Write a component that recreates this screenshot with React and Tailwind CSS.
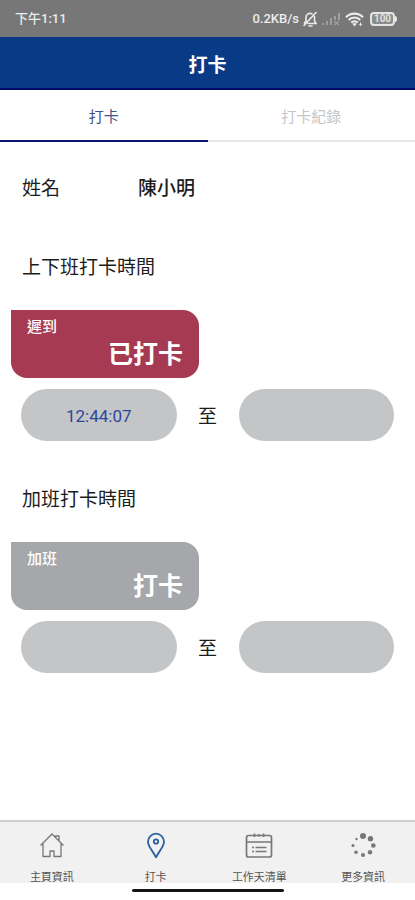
import { useState } from "react";

const TABS = [
  { id: "clock", label: "打卡" },
  { id: "records", label: "打卡紀錄" },
];

const SHIFTS = [
  { id: "work", title: "上下班打卡時間", status: "遲到", action: "已打卡", late: true, start: "12:44:07", end: "" },
  { id: "overtime", title: "加班打卡時間", status: "加班", action: "打卡", late: false, start: "", end: "" },
];

const NAV_ITEMS = [
  { id: "home", label: "主頁資訊", Icon: HomeIcon },
  { id: "clock", label: "打卡", Icon: PinIcon },
  { id: "workdays", label: "工作天清單", Icon: CalendarIcon },
  { id: "more", label: "更多資訊", Icon: MoreIcon },
];

export default function App() {
  const [tab, setTab] = useState("clock");

  return (
    <div className="flex min-h-screen flex-col bg-white font-['Roboto','Noto_Sans_CJK_TC',sans-serif] text-[#1c1c1c]">
      <StatusBar />

      <header className="flex h-[53px] items-center justify-center border-b-2 border-[#04086a] bg-[#083a85] pt-1.5">
        <h1 className="text-[19px] leading-6 font-bold text-white">打卡</h1>
      </header>

      <div role="tablist" className="grid grid-cols-2">
        {TABS.map((t) => (
          <button
            key={t.id}
            type="button"
            role="tab"
            aria-selected={tab === t.id}
            onClick={() => setTab(t.id)}
            className={`h-[52px] border-b-2 pt-1 text-[15px] ${
              tab === t.id ? "border-[#0b1470] text-[#3d5489]" : "border-[#e6e8ea] text-[#c6c6c6]"
            }`}
          >
            {t.label}
          </button>
        ))}
      </div>

      <main className="flex-1 pt-[35px]">
        <dl className="flex px-[22px] pb-2 text-[19px] leading-6">
          <dt className="w-29">姓名</dt>
          <dd className="font-medium">陳小明</dd>
        </dl>

        {SHIFTS.map((shift) => (
          <ShiftSection key={shift.id} shift={shift} />
        ))}
      </main>

      <BottomNav />
    </div>
  );
}

function ShiftSection({ shift }) {
  return (
    <section className="pt-[47px]">
      <h2 className="px-[22px] text-[19px] leading-6">{shift.title}</h2>

      <button
        type="button"
        className={`mt-[30px] ml-[11px] flex h-[68px] w-47 flex-col rounded-2xl rounded-tl-none px-4 pt-[5px] text-white ${
          shift.late ? "bg-[#a63a52]" : "bg-[#a5a7aa]"
        }`}
      >
        <span className="self-start text-[15px] leading-6 font-medium">{shift.status}</span>
        <span className="self-end text-[25px] leading-8 font-bold">{shift.action}</span>
      </button>

      <div className="mt-[11px] flex items-center px-[21px]">
        <TimeField label={`${shift.title} 開始`} value={shift.start} />
        <span className="w-[62px] pt-1 text-center text-[19px] leading-6">至</span>
        <TimeField label={`${shift.title} 結束`} value={shift.end} />
      </div>
    </section>
  );
}

function TimeField({ label, value }) {
  return (
    <input
      type="text"
      readOnly
      aria-label={label}
      value={value}
      className="h-[52px] min-w-0 flex-1 rounded-full bg-[#c3c5c7] pt-0.5 text-center text-[17px] text-[#2c479c] outline-none"
    />
  );
}

function BottomNav() {
  return (
    <footer>
      <nav className="grid h-[63px] grid-cols-4 border-t-2 border-[#cfcfcf] bg-[#f1f1f1]">
        {NAV_ITEMS.map(({ id, label, Icon }) => (
          <a key={id} href={`#${id}`} className="flex flex-col items-center pt-2 text-[#777777]">
            <Icon />
            <span className="mt-3 text-[11px] leading-4 text-[#555555]">{label}</span>
          </a>
        ))}
      </nav>
      <div className="flex h-[17px] justify-center pt-[6px]">
        <div className="h-[3px] w-[152px] rounded-full bg-[#161616]" />
      </div>
    </footer>
  );
}

function StatusBar() {
  return (
    <div className="flex h-[37px] items-center justify-between bg-[#777777] pr-[18px] pl-[15px] text-[13px] font-medium text-[#ececec]">
      <span>下午1:11</span>
      <div className="flex items-center gap-1">
        <span>0.2KB/s</span>
        <svg width="14" height="16" viewBox="0 0 14 16" fill="none" stroke="currentColor" strokeWidth="1.6" strokeLinecap="round">
          <path d="M3 10V6.5a4 4 0 0 1 6-3.600M11.500 5.500V10l1.500 2.500H5M6 15h3M1 14.500 13 1.500M1.500 12 3 10" />
        </svg>
        <svg width="20" height="16" viewBox="0 0 20 16" fill="none" stroke="#a0a0a0" strokeWidth="2">
          <path d="M2 14v-2M6 14v-4M10 14V7M14 9V5M18 9V2" />
          <path d="m13 10 5 4M18 10l-5 4" strokeWidth="1.3" />
        </svg>
        <svg width="19" height="16" viewBox="0 0 19 16" fill="none" stroke="currentColor" strokeWidth="2.2">
          <path d="M1 6.2a12 12 0 0 1 17 0M3.7 9a8 8 0 0 1 11.6 0M6.3 11.600a4.600 4.600 0 0 1 6.400 0" />
          <path d="m9.500 15.500-2-2.500a3 3 0 0 1 4 0Z" fill="currentColor" stroke="none" />
          <path d="M15.500 11.500v3M14 13.200l1.500 1.500 1.500-1.500" strokeWidth="1" />
        </svg>
        <div className="ml-0.5 flex items-center">
          <span className="flex h-[14px] w-[25px] items-center justify-center rounded border-2 border-[#e4e4e4] bg-[#8c8c8c] text-[10px] leading-none font-bold text-[#e0e0e0]">
            100
          </span>
          <span className="h-[6px] w-[2px] rounded-r bg-[#e4e4e4]" />
        </div>
      </div>
    </div>
  );
}

function HomeIcon() {
  return (
    <svg width="26" height="28" viewBox="0 0 26 28" fill="none" stroke="currentColor" strokeWidth="1.3" strokeLinejoin="round">
      <path d="M1.5 15.5 13 4l11.5 11.5M4 13.500v13h7V21h4v5.500h7v-13M16.500 7.500V6H20v5" />
    </svg>
  );
}

function PinIcon() {
  return (
    <svg width="26" height="28" viewBox="0 0 26 28" fill="none" stroke="#2c5f9f" strokeWidth="1.8" strokeLinejoin="round">
      <path d="M13 27.500C10.500 21.500 5 17 5 11.700a8 8 0 0 1 16 0C21 17 15.500 21.500 13 27.500Z" />
      <circle cx="13" cy="11.500" r="2.200" />
    </svg>
  );
}

function CalendarIcon() {
  return (
    <svg width="28" height="28" viewBox="0 0 28 28" fill="none" stroke="currentColor" strokeWidth="1.7">
      <rect x="1.500" y="5.500" width="25" height="21.500" rx="2" />
      <path d="M1.500 12h25M9.500 3.500V7M18.500 3.500V7" />
      <path d="M14 4v2.500" />
      <path d="M7 17.500h2M10.500 17.500h11M7 21.500h2M10.500 21.500h11" strokeWidth="1.5" />
    </svg>
  );
}

function MoreIcon() {
  return (
    <svg width="28" height="28" viewBox="0 0 28 28" fill="currentColor">
      <circle cx="14" cy="6" r="3" />
      <circle cx="21.500" cy="8.800" r="2.700" />
      <circle cx="24.300" cy="15.500" r="2.300" />
      <circle cx="21" cy="22.300" r="2.200" />
      <circle cx="14" cy="25" r="2" />
      <circle cx="7" cy="22.300" r="1.800" />
      <circle cx="4" cy="15.500" r="1.500" />
      <circle cx="7.500" cy="9" r="1.200" />
    </svg>
  );
}
